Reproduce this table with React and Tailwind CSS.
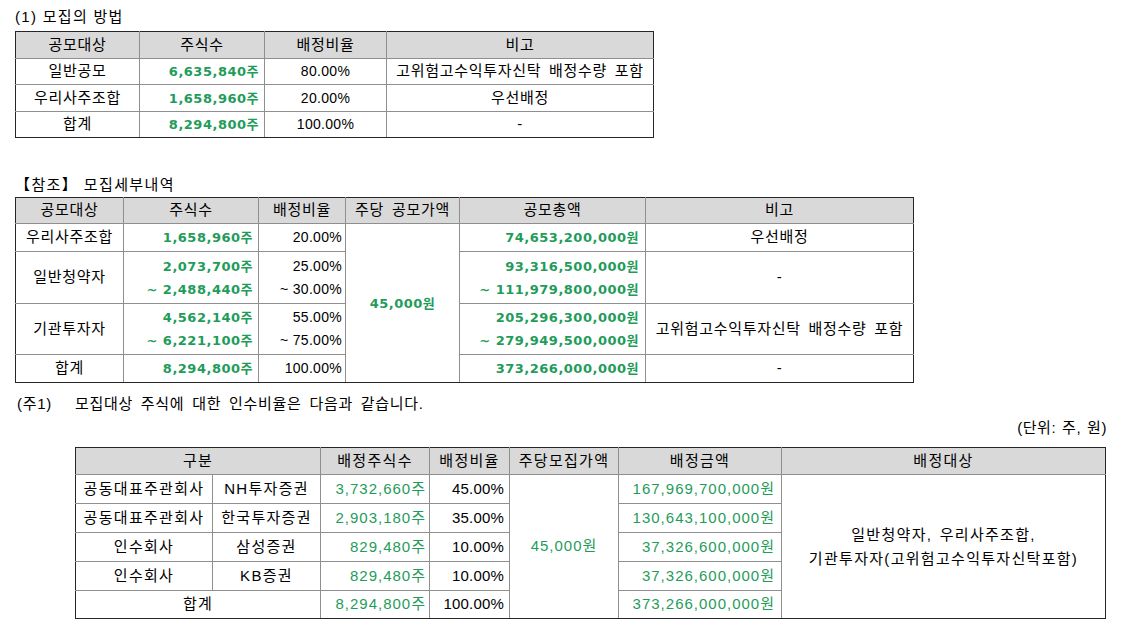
import React from "react";
import clsx from "clsx";

function Td({ e = "", className = "", children, ...rest }) {
  return (
    <td
      {...rest}
      className={clsx(
        "border border-[#8f8f8f] p-0 align-middle",
        e.includes("t") && "border-t-[#262626]",
        e.includes("b") && "border-b-[#262626]",
        e.includes("l") && "border-l-[#262626]",
        e.includes("r") && "border-r-[#262626]",
        className
      )}
    >
      {children}
    </td>
  );
}

const H = "bg-[#d9d9d9] text-center";
const GB = "font-['DejaVu_Sans','Noto_Sans_CJK_KR',sans-serif] font-bold text-[13px] tracking-[0.5px] [word-spacing:0px] text-[#1f9c5a]";
const GR = "font-['Liberation_Sans','Noto_Sans_CJK_KR',sans-serif] text-[15px] tracking-[1px] [word-spacing:0px] text-[#1f9c5a]";
const NUM = "text-[14px] tracking-[0.3px] [word-spacing:0px]";

function Table1() {
  return (
    <table className="table-fixed border-collapse w-[638px] text-[15px] tracking-[0.7px] [word-spacing:3px]">
      <colgroup>
        <col className="w-[124px]" />
        <col className="w-[125px]" />
        <col className="w-[122px]" />
        <col className="w-[267px]" />
      </colgroup>
      <tbody>
        <tr className="h-[27px]">
          <Td e="tl" className={H}>공모대상</Td>
          <Td e="t" className={H}>주식수</Td>
          <Td e="t" className={H}>배정비율</Td>
          <Td e="tr" className={H}>비고</Td>
        </tr>
        <tr className="h-[26px]">
          <Td e="l" className="text-center">일반공모</Td>
          <Td className="text-right pr-[5px]"><span className={GB}>6,635,840주</span></Td>
          <Td className={clsx("text-center", NUM)}>80.00%</Td>
          <Td e="r" className="text-center">고위험고수익투자신탁 배정수량 포함</Td>
        </tr>
        <tr className="h-[27px]">
          <Td e="l" className="text-center">우리사주조합</Td>
          <Td className="text-right pr-[5px]"><span className={GB}>1,658,960주</span></Td>
          <Td className={clsx("text-center", NUM)}>20.00%</Td>
          <Td e="r" className="text-center">우선배정</Td>
        </tr>
        <tr className="h-[26px]">
          <Td e="lb" className="text-center">합계</Td>
          <Td e="b" className="text-right pr-[5px]"><span className={GB}>8,294,800주</span></Td>
          <Td e="b" className={clsx("text-center", NUM)}>100.00%</Td>
          <Td e="br" className="text-center">-</Td>
        </tr>
      </tbody>
    </table>
  );
}

function Two({ a, b, cls }) {
  return (
    <div className="flex flex-col leading-[23px]">
      <span className={cls}>{a}</span>
      <span className={cls}>{b}</span>
    </div>
  );
}

function Table2() {
  return (
    <table className="table-fixed border-collapse w-[898px] text-[15px] tracking-[0.7px] [word-spacing:3px]">
      <colgroup>
        <col className="w-[108px]" />
        <col className="w-[135px]" />
        <col className="w-[87px]" />
        <col className="w-[114px]" />
        <col className="w-[186px]" />
        <col className="w-[268px]" />
      </colgroup>
      <tbody>
        <tr className="h-[26px]">
          <Td e="tl" className={H}>공모대상</Td>
          <Td e="t" className={H}>주식수</Td>
          <Td e="t" className={H}>배정비율</Td>
          <Td e="t" className={H}>주당 공모가액</Td>
          <Td e="t" className={H}>공모총액</Td>
          <Td e="tr" className={H}>비고</Td>
        </tr>
        <tr className="h-[28px]">
          <Td e="l" className="text-center">우리사주조합</Td>
          <Td className="text-right pr-[5px]"><span className={GB}>1,658,960주</span></Td>
          <Td className={clsx("text-right pr-[3px]", NUM)}>20.00%</Td>
          <Td e="b" rowSpan={4} className="text-center"><span className={GB}>45,000원</span></Td>
          <Td className="text-right pr-[6px]"><span className={GB}>74,653,200,000원</span></Td>
          <Td e="r" className="text-center">우선배정</Td>
        </tr>
        <tr className="h-[52px]">
          <Td e="l" className="text-center">일반청약자</Td>
          <Td className="text-right pr-[5px]"><Two a="2,073,700주" b="~ 2,488,440주" cls={GB} /></Td>
          <Td className={clsx("text-right pr-[3px]", NUM)}><Two a="25.00%" b="~ 30.00%" /></Td>
          <Td className="text-right pr-[6px]"><Two a="93,316,500,000원" b="~ 111,979,800,000원" cls={GB} /></Td>
          <Td e="r" className="text-center">-</Td>
        </tr>
        <tr className="h-[51px]">
          <Td e="l" className="text-center">기관투자자</Td>
          <Td className="text-right pr-[5px]"><Two a="4,562,140주" b="~ 6,221,100주" cls={GB} /></Td>
          <Td className={clsx("text-right pr-[3px]", NUM)}><Two a="55.00%" b="~ 75.00%" /></Td>
          <Td className="text-right pr-[6px]"><Two a="205,296,300,000원" b="~ 279,949,500,000원" cls={GB} /></Td>
          <Td e="r" className="text-center">고위험고수익투자신탁 배정수량 포함</Td>
        </tr>
        <tr className="h-[28px]">
          <Td e="lb" className="text-center">합계</Td>
          <Td e="b" className="text-right pr-[5px]"><span className={GB}>8,294,800주</span></Td>
          <Td e="b" className={clsx("text-right pr-[3px]", NUM)}>100.00%</Td>
          <Td e="b" className="text-right pr-[6px]"><span className={GB}>373,266,000,000원</span></Td>
          <Td e="br" className="text-center">-</Td>
        </tr>
      </tbody>
    </table>
  );
}

function Table3() {
  const rows = [
    ["공동대표주관회사", "NH투자증권", "3,732,660주", "45.00%", "167,969,700,000원"],
    ["공동대표주관회사", "한국투자증권", "2,903,180주", "35.00%", "130,643,100,000원"],
    ["인수회사", "삼성증권", "829,480주", "10.00%", "37,326,600,000원"],
    ["인수회사", "KB증권", "829,480주", "10.00%", "37,326,600,000원"],
  ];
  const PCT = "text-[15px] tracking-[0.2px]";
  return (
    <table className="table-fixed border-collapse w-[1030px] text-[15px] tracking-[1.3px] [word-spacing:2px]">
      <colgroup>
        <col className="w-[137px]" />
        <col className="w-[108px]" />
        <col className="w-[109px]" />
        <col className="w-[80px]" />
        <col className="w-[109px]" />
        <col className="w-[163px]" />
        <col className="w-[324px]" />
      </colgroup>
      <tbody>
        <tr className="h-[27px]">
          <Td e="tl" colSpan={2} className={H}>구분</Td>
          <Td e="t" className={H}>배정주식수</Td>
          <Td e="t" className={H}>배정비율</Td>
          <Td e="t" className={H}>주당모집가액</Td>
          <Td e="t" className={H}>배정금액</Td>
          <Td e="tr" className={H}>배정대상</Td>
        </tr>
        {rows.map((r, i) => (
          <tr key={i} className="h-[29px]">
            <Td e="l" className="text-center">{r[0]}</Td>
            <Td className="text-center">{r[1]}</Td>
            <Td className="text-right pr-[3px]"><span className={GR}>{r[2]}</span></Td>
            <Td className={clsx("text-right pr-[5px]", PCT)}>{r[3]}</Td>
            {i === 0 && (
              <Td e="b" rowSpan={5} className="text-center"><span className={GR}>45,000원</span></Td>
            )}
            <Td className="text-right pr-[6px]"><span className={GR}>{r[4]}</span></Td>
            {i === 0 && (
              <Td e="br" rowSpan={5} className="text-center leading-[24px]">
                <div>일반청약자, 우리사주조합,</div>
                <div>기관투자자(고위험고수익투자신탁포함)</div>
              </Td>
            )}
          </tr>
        ))}
        <tr className="h-[28px]">
          <Td e="lb" colSpan={2} className="text-center">합계</Td>
          <Td e="b" className="text-right pr-[3px]"><span className={GR}>8,294,800주</span></Td>
          <Td e="b" className={clsx("text-right pr-[5px]", PCT)}>100.00%</Td>
          <Td e="b" className="text-right pr-[6px]"><span className={GR}>373,266,000,000원</span></Td>
        </tr>
      </tbody>
    </table>
  );
}

export default function App() {
  return (
    <div className="w-[1131px] h-[626px] bg-white text-black overflow-hidden font-['Liberation_Sans','Noto_Sans_CJK_KR',sans-serif]">
      <div className="pl-[15px]">
        <div className="h-[31px] pt-[6px] text-[15px] leading-[22px] tracking-[1.3px]">(1) 모집의 방법</div>
        <Table1 />
        <div className="mt-[36px] h-[23px] text-[15px] leading-[22px] tracking-[1.4px]">【참조】 모집세부내역</div>
        <Table2 />
      </div>
      <div className="mt-[10px] flex text-[15px] leading-[22px] tracking-[0.7px] [word-spacing:3px]">
        <span className="w-[75px] pl-[17px]">(주1)</span>
        <span>모집대상 주식에 대한 인수비율은 다음과 같습니다.</span>
      </div>
      <div className="w-[1107px] mt-[2px] h-[30px] text-right text-[15px] leading-[22px] tracking-[0.6px] [word-spacing:1px]">(단위: 주, 원)</div>
      <div className="pl-[75px]">
        <Table3 />
      </div>
    </div>
  );
}
